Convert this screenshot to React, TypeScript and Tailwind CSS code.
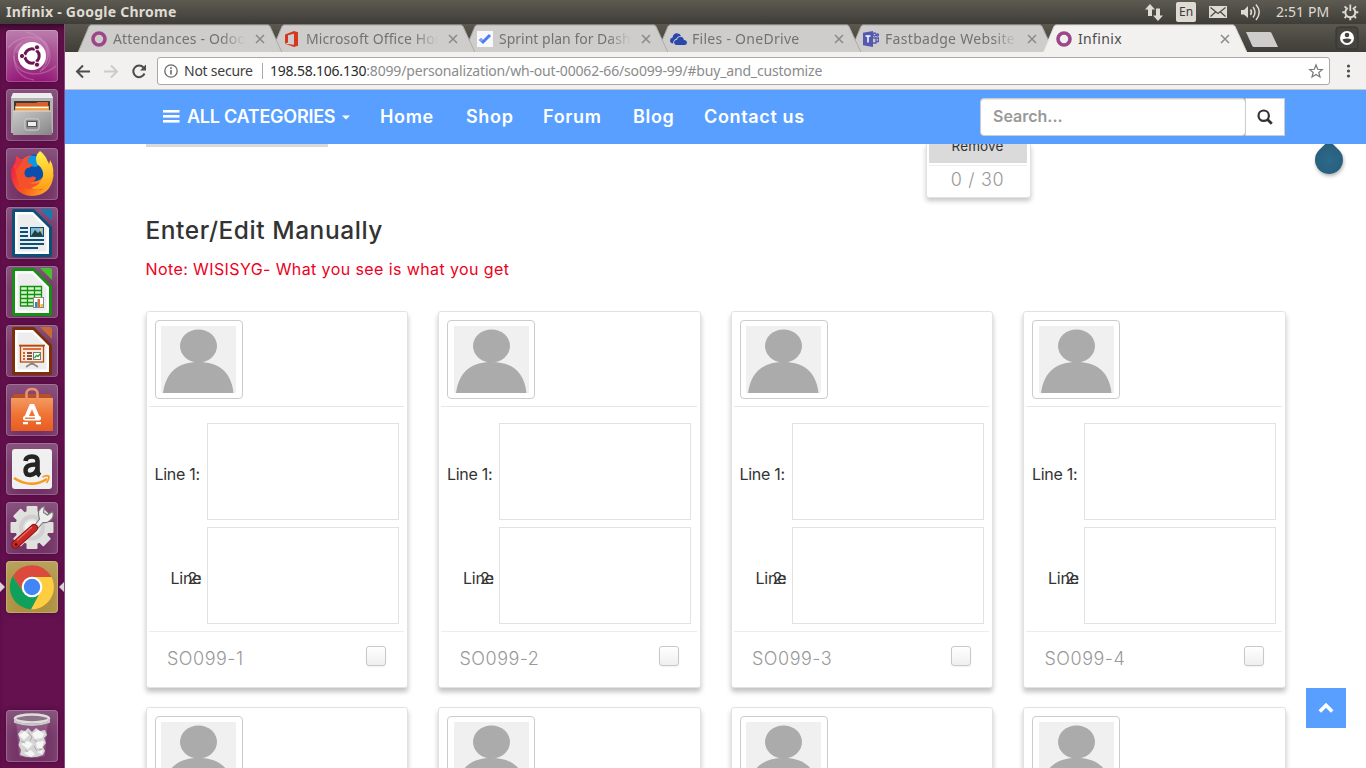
import React from "react";

const UBUNTU = "font-['Noto_Sans','Open_Sans',sans-serif]";
const POPPINS = "font-['Inter','Noto_Sans',sans-serif]";

/* ---------- Desktop top bar ---------- */

function TopBar() {
  return (
    <header
      className={`flex h-6 shrink-0 items-center bg-linear-to-b from-[#5d5b51] to-[#3e3d38] text-[#dfdbd2] ${UBUNTU}`}
    >
      <div className="w-[1144px] pl-[6px] text-[14px] leading-6 font-bold tracking-[0.25px] whitespace-nowrap">
        Infinix - Google Chrome
      </div>
      <svg className="w-8 shrink-0" height="24" viewBox="0 0 32 24" fill="#dfdbd2">
        <path d="M6 4 L11 9.5 H8 V16 H4 V9.5 H1 Z" />
        <path d="M14 21 L19 15.500 H16 V8.500 H12 V15.500 H9 Z" />
      </svg>
      <div className="mr-[13px] flex h-5 w-5 items-center justify-center rounded-[2px] bg-[#dfdbd2] text-[12px] text-[#3c3b37]">
        En
      </div>
      <svg className="w-8 shrink-0" height="24" viewBox="0 0 32 24">
        <rect x="0" y="6" width="18" height="12" fill="#dfdbd2" />
        <path d="M1.500 7.500 L9 13.500 L16.500 7.500 M1.500 16.500 L6.500 12 M16.500 16.500 L11.500 12" stroke="#4a4943" fill="none" strokeWidth="1.200" />
      </svg>
      <svg className="w-[35px] shrink-0" height="24" viewBox="0 0 35 24">
        <path d="M0 10 H3 L7 6 V18 L3 14.500 H0 Z" fill="#dfdbd2" />
        <path d="M9.500 9.500 Q11.500 12.200 9.500 15 M12 7 Q16 12.200 12 17.500 M15 4.500 Q21.500 12.200 15 20" stroke="#dfdbd2" strokeWidth="1.500" fill="none" />
      </svg>
      <div className="w-[66px] text-[14px] leading-6 tracking-[0.1px] whitespace-nowrap">2:51 PM</div>
      <svg width="18" height="24" viewBox="0 0 18 24" fill="none" stroke="#dfdbd2">
        <path d="M5.800 8 A5 5 0 1 0 10.800 8" strokeWidth="2" />
        <path d="M8.300 4.500 V11" strokeWidth="1.800" />
        <path d="M13.800 12.200 H16.300 M2.800 12.200 H0.300 M12.200 16.200 L14 18 M4.400 16.200 L2.600 18 M8.300 17.700 V20.200 M12.200 8.200 L14 6.400 M4.400 8.200 L2.600 6.400" strokeWidth="1.900" />
      </svg>
    </header>
  );
}

/* ---------- Launcher ---------- */

function UbuntuIcon() {
  return (
    <svg viewBox="0 0 52 52" className="h-full w-full">
      <g fill="none" stroke="#dca6d0" strokeOpacity=".35" strokeWidth="1.300">
        <path d="M2 18 C12 4 38 2 43 20 C46 30 42 36 36 40" />
        <path d="M20 2 C40 6 50 24 34 42" />
        <path d="M50 36 C36 48 14 46 9 32 C6 22 10 16 16 13" />
        <path d="M8 26 C8 40 14 48 28 50" />
      </g>
      <path d="M8 22 C8 8 30 4 40 12 C46 24 42 30 40 34 Z" fill="#d48cc4" opacity=".3" />
      <circle cx="26" cy="26" r="14" fill="#fff" />
      <circle cx="26" cy="26" r="7.200" fill="none" stroke="#6b1552" strokeWidth="3" />
      <path d="M26 26 L14 26 M26 26 L32 15.600 M26 26 L32 36.400" stroke="#fff" strokeWidth="1.300" />
      <circle cx="26" cy="26" r="5" fill="#fff" />
      <g fill="#6b1552" stroke="#fff" strokeWidth="1">
        <circle cx="16" cy="26" r="2.600" />
        <circle cx="31" cy="17.300" r="2.600" />
        <circle cx="31" cy="34.700" r="2.600" />
      </g>
    </svg>
  );
}

function FilesIcon() {
  return (
    <svg viewBox="0 0 52 52" className="h-full w-full">
      <defs>
        <linearGradient id="cab" x1="0" y1="0" x2="1" y2="1">
          <stop offset="0" stopColor="#c9c9c9" />
          <stop offset=".5" stopColor="#a8a8a8" />
          <stop offset="1" stopColor="#858585" />
        </linearGradient>
      </defs>
      <path d="M7 4 H45 L47 9 V44 H5 V9 Z" fill="#b5b5b5" />
      <path d="M7 4 H45 L47 9 H5 Z" fill="#ededed" />
      <rect x="8" y="12" width="36" height="10" fill="#3b3936" />
      <path d="M10 14 H30 L32 13 H42 V18 H10 Z" fill="#d9602c" />
      <path d="M9 17 H43 V22 H9 Z" fill="#f1a048" />
      <path d="M10 18.500 H42" stroke="#fff" strokeWidth="1.200" />
      <path d="M7 22 H45 L46 46 H7 Z" fill="url(#cab)" />
      <path d="M7 22 H45" stroke="#ddd" />
      <rect x="19" y="30" width="14" height="11" rx="2" fill="#8e8e8e" stroke="#d5d5d5" />
      <rect x="21.500" y="32.500" width="9" height="5" fill="#eee" stroke="#555" />
    </svg>
  );
}

function FirefoxIcon() {
  return (
    <svg viewBox="0 0 52 52" className="h-full w-full">
      <defs>
        <linearGradient id="ff" x1="0" y1=".3" x2="1" y2=".7">
          <stop offset="0" stopColor="#ee2048" />
          <stop offset=".45" stopColor="#fa5a1c" />
          <stop offset="1" stopColor="#ffb62a" />
        </linearGradient>
        <linearGradient id="ffy" x1="0" y1="0" x2="0" y2="1">
          <stop offset="0" stopColor="#fff34a" />
          <stop offset="1" stopColor="#ff9e12" />
        </linearGradient>
      </defs>
      <path d="M5 26 Q5 17 10 13 V8 L16 13 L26 10 L40 12 Q48 18 47.500 28 Q45 47 26 48 Q7 47 5 26 Z" fill="url(#ff)" />
      <circle cx="27" cy="20" r="13.500" fill="#0a4fae" />
      <path d="M17 11 Q24 5 33 9 Q36 16 30 19 Q22 19 17 11 Z" fill="#0e96e2" />
      <path d="M8 18 Q11 12 17 11 Q21 7 26 7 Q21 10 21.500 14.500 L26.500 16.500 Q26 19 20.500 20.500 Q17 24 19.500 28.500 Q23 30.500 26 28.500 Q30 28 30 30.500 Q27 35.500 22 35 Q30 38 40 31 L36 42 L14 40 Z" fill="#f5502c" />
      <path d="M10 8 L17 12.500 L9 24 Z" fill="#f03a40" />
      <path d="M34 3 Q28 8 31 16 Q38 21 37 28 Q35 37 25 40 Q38 45 45 34 Q50 20 44 12 L43 17 Q40 7 34 3 Z" fill="url(#ffy)" />
    </svg>
  );
}

function DocumentIcon({ color, corner, children }: { color: string; corner: string; children: React.ReactNode }) {
  return (
    <svg viewBox="0 0 52 52" className="h-full w-full">
      <path d="M8 2 H28 L46 20 V48 Q46 50 44 50 H8 Q6 50 6 48 V4 Q6 2 8 2 Z" fill={color} />
      <path d="M34 2 H44 Q46 2 46 4 V14 Z" fill={corner} />
      <path d="M9 5 H27 L43 21 V47 H9 Z" fill="#fff" />
      <path d="M11.500 7.500 H26 L40.500 22 V44.500 H11.500 Z" fill="#ededed" />
      {children}
    </svg>
  );
}

function WriterIcon() {
  return (
    <DocumentIcon color="#0a5078" corner="#1a7ab0">
      <path d="M14 21 H22 M14 25 H22 M14 29 H22 M14 33 H38 M14 37 H38 M14 41 H32" stroke="#0a5078" strokeWidth="1.800" />
      <rect x="24.500" y="20.500" width="13" height="9" fill="#7cb9e0" stroke="#0a5078" />
      <path d="M25 29 L29 23 L32 26 L34 24 L37 29 Z" fill="#243f3c" />
      <circle cx="35" cy="22.800" r="1.300" fill="#f7c331" />
    </DocumentIcon>
  );
}

function CalcIcon() {
  return (
    <DocumentIcon color="#159014" corner="#43c330">
      <rect x="14" y="20" width="22" height="20" fill="#d4f5c8" />
      <path d="M14 20.500 H36 M14 24.500 H36 M14 28.500 H36 M14 32.500 H36 M14 36.500 H36 M14 40 H36 M14.500 20 V40 M21.500 20 V40 M28.500 20 V40 M35.500 20 V40" stroke="#159014" strokeWidth="1.300" />
      <rect x="27.500" y="31.500" width="10" height="10" fill="#fff" stroke="#888" />
      <path d="M29 36 H31.500 V41 H29 Z" fill="#0d8fd6" />
      <path d="M31.500 33 H34 V41 H31.500 Z" fill="#e06a2c" />
      <path d="M34.500 38 H37 V41 H34.500 Z" fill="#f5c02c" />
    </DocumentIcon>
  );
}

function ImpressIcon() {
  return (
    <DocumentIcon color="#7d2f0a" corner="#c86a34">
      <path d="M13 20.500 H39" stroke="#b7490f" strokeWidth="1.600" />
      <rect x="14.500" y="21" width="23" height="16" fill="#fce9dd" stroke="#b7490f" strokeWidth="1.300" />
      <path d="M17 24 H35" stroke="#d7622a" strokeWidth="1.800" />
      <path d="M17 28 H19 M17 31 H19 M17 34 H19" stroke="#d7622a" strokeWidth="2" />
      <path d="M21 28 H26 M21 31 H26 M21 34 H26" stroke="#5b2408" strokeWidth="1.500" />
      <rect x="27.500" y="27.500" width="7" height="7" fill="#fff" stroke="#777" />
      <path d="M28.500 33 L30.500 30.500 L32 31.500 L34 29" stroke="#2fa52c" fill="none" strokeWidth="1.400" />
      <path d="M26 37 V39 M26 38 L20 42 M26 38 L32 42" stroke="#888" strokeWidth="1.700" />
    </DocumentIcon>
  );
}

function SoftwareIcon() {
  return (
    <svg viewBox="0 0 52 52" className="h-full w-full">
      <defs>
        <linearGradient id="bag" x1="0" y1="0" x2="0" y2="1">
          <stop offset="0" stopColor="#f39a62" />
          <stop offset=".5" stopColor="#ef7434" />
          <stop offset="1" stopColor="#e85c22" />
        </linearGradient>
      </defs>
      <path d="M5 14 L8 10 H44 L47 14 Z" fill="#b5502a" />
      <path d="M5 14 H47 V47 H5 Z" fill="url(#bag)" />
      <path d="M20.500 17 V9 Q21 5 26 5 Q31 5 31.500 9 V17" stroke="#ed9069" strokeWidth="2.600" fill="none" />
      <path d="M20 34 L25.200 22 H26.800 L32 34" stroke="#fff" strokeWidth="4" fill="none" />
      <rect x="17" y="32" width="18" height="4.400" rx="2" fill="#fff" />
      <path d="M19 34.200 H29" stroke="#ee6b2c" strokeWidth="1.300" />
      <path d="M17 39.200 H22 M30 39.200 H35" stroke="#fff" strokeWidth="2.200" />
    </svg>
  );
}

function AmazonIcon() {
  return (
    <svg viewBox="0 0 52 52" className="h-full w-full">
      <rect x="6" y="6" width="40" height="40" rx="3" fill="#f0f0f0" />
      <path d="M19.500 18 Q20 13.500 26 13.500 Q31.500 13.500 31.500 18 V28 Q31.500 31 34 32.500" stroke="#242424" strokeWidth="4.600" fill="none" />
      <path d="M31 21.500 Q19.500 21 19.500 27.500 Q19.500 32 24 32 Q29.500 31.500 31.300 26" stroke="#242424" strokeWidth="4.400" fill="none" />
      <path d="M8 35 Q25 46 41 36" stroke="#f79a1e" strokeWidth="2.600" fill="none" />
      <path d="M36.500 34 Q41 31.500 43 33.500 Q43 37 40.500 40" stroke="#f79a1e" strokeWidth="1.700" fill="none" />
    </svg>
  );
}

function SettingsIcon() {
  return (
    <svg viewBox="0 0 52 52" className="h-full w-full">
      <g fill="#e0e0de">
        {[0, 45, 90, 135].map((a) => (
          <rect key={a} x="20.500" y="4" width="11" height="43" rx="1" transform={`rotate(${a} 26 25.500)`} />
        ))}
        <circle cx="26" cy="25.500" r="17" />
      </g>
      <circle cx="26" cy="25.500" r="11" fill="none" stroke="#cfcfcd" strokeWidth="4" />
      <circle cx="26" cy="25.500" r="7" fill="#f4f4f3" />
      <path d="M29 23 L33.500 17 Q30 7 38.500 4 L37.500 10.500 L41.500 13 L46.500 9.500 Q49 16 42 20 Q40 21 37 20.500 L32 26 Z" fill="#eeeeee" stroke="#777" strokeWidth="1.100" />
      <path d="M9.500 42.500 L28 26" stroke="#8d1010" strokeWidth="8" strokeLinecap="round" />
      <path d="M9.500 42.500 L28 26" stroke="#c92a26" strokeWidth="6.200" strokeLinecap="round" />
      <path d="M11 38.500 L26 25" stroke="#ea6a62" strokeWidth="1.400" />
      <circle cx="10" cy="42.500" r="1.300" fill="#4a0606" />
    </svg>
  );
}

function ChromeIcon() {
  return (
    <svg viewBox="0 0 52 52" className="h-full w-full">
      <path d="M26 16 H45.500 A22.200 22.200 0 0 1 25 48.200 L35 30 Z" fill="#ffcd40" />
      <path d="M6.800 15 L17.500 31 L33 33 L25 48.200 A22.200 22.200 0 0 1 6.800 15 Z" fill="#11a05c" />
      <path d="M6.800 15 A22.200 22.200 0 0 1 45.500 16 H26 L17 30 Z" fill="#dc4a3d" />
      <circle cx="26" cy="26" r="10.300" fill="#fff" />
      <circle cx="26" cy="26" r="8.200" fill="#4285f4" />
    </svg>
  );
}

function TrashIcon() {
  return (
    <svg viewBox="0 0 52 52" className="h-full w-full">
      <path d="M10 9 L13 46 Q26 50 39 46 L42 9 Z" fill="#c9a5c1" opacity=".28" />
      <path d="M12 24 L15 20 L19 21 L22 18 L26 22 L30 18 L34 21 L39 20 L41 25 L38 28 L40 33 L37 37 L39 41 L37 45 Q26 49.500 14 45 L15 40 L12.500 35 L14 30 Z" fill="#d6d5d5" />
      <path d="M13 25 L19 21 L23 25 L18 30 Z M26 24 L32 20 L38 24 L36 28 L29 29 Z M15 34 L22 31 L27 34 L22 39 Z M30 32 L38 31 L36 38 L31 38 Z M18 43 L25 40 L29 44 L25 47 Z M31 42 L37 40 L36 44 Z" fill="#f6f6f6" />
      <path d="M22 22 L26 27 L24 31 M28 30 L31 32 M15 31 L19 33 M28 36 L31 41 M19 40 L22 42 M33 40 L36 39" stroke="#aaa8a9" strokeWidth="1" fill="none" />
      <ellipse cx="26" cy="8.500" rx="17" ry="4" fill="#8d7388" stroke="#dededc" strokeWidth="2.600" />
      <path d="M9 9 V12 Q26 18 43 12 V9" fill="none" stroke="#c9c8c7" strokeWidth="2" />
    </svg>
  );
}

function Tile({ children, tone = "bg-[#743366]" }: { children: React.ReactNode; tone?: string }) {
  return (
    <div className={`relative h-[52px] w-[52px] shrink-0 rounded-[4px] shadow-[0_0_5px_rgba(0,0,0,0.35),inset_0_0_0_1px_rgba(255,255,255,0.2),inset_0_12px_16px_rgba(255,255,255,0.16)] ${tone}`}>
      {children}
    </div>
  );
}

function Launcher() {
  return (
    <nav className="flex w-[65px] shrink-0 flex-col items-center gap-[7px] border-r border-[#8a4c80] bg-[#65104f] pt-[6px] shadow-[inset_0_6px_6px_-3px_rgba(0,0,0,0.5)]">
      <Tile tone="bg-linear-to-b from-[#b0679f] to-[#941478]"><UbuntuIcon /></Tile>
      <Tile><FilesIcon /></Tile>
      <Tile><FirefoxIcon /></Tile>
      <Tile><WriterIcon /></Tile>
      <Tile><CalcIcon /></Tile>
      <Tile><ImpressIcon /></Tile>
      <Tile><SoftwareIcon /></Tile>
      <Tile><AmazonIcon /></Tile>
      <Tile><SettingsIcon /></Tile>
      <Tile tone="bg-[#ad9140]">
        <svg className="absolute top-[20px] left-[-6px]" width="5" height="12" viewBox="0 0 5 12">
          <path d="M0 1 L5 6 L0 11 Z" fill="#dcd2da" />
        </svg>
        <svg className="absolute top-[20px] left-[53px]" width="5" height="12" viewBox="0 0 5 12">
          <path d="M5 1 L0 6 L5 11 Z" fill="#dcd2da" />
        </svg>
        <ChromeIcon />
      </Tile>
      <div className="mt-[90px]"><Tile><TrashIcon /></Tile></div>
    </nav>
  );
}

/* ---------- Browser chrome ---------- */

function RingFavicon() {
  return (
    <svg width="16" height="16" viewBox="0 0 16 16">
      <circle cx="8" cy="8" r="6" fill="none" stroke="#9c4789" strokeWidth="3.600" />
    </svg>
  );
}

function OfficeFavicon() {
  return (
    <svg width="16" height="16" viewBox="0 0 16 16">
      <path d="M1 3.500 L10 0 L14 1.200 V14.800 L10 16 L1 12.700 L10 13.700 V2.700 L4 4.200 V11.500 L1 12.700 Z" fill="#d6371f" />
    </svg>
  );
}

function CheckFavicon() {
  return (
    <svg width="16" height="16" viewBox="0 0 16 16">
      <rect width="16" height="16" fill="#f8f8fa" />
      <path d="M3 8 L6 11 L13 4" stroke="#4a7df0" strokeWidth="3" fill="none" />
      <path d="M3 8 L5 10" stroke="#8a9cf5" strokeWidth="3" />
    </svg>
  );
}

function OneDriveFavicon() {
  return (
    <svg width="17" height="16" viewBox="0 0 17 16" fill="#2a47ac">
      <path d="M3 12.500 Q0 12 0 9.500 Q0 7 2.600 6.500 Q3 2.500 7 2.300 Q10 2.500 11 5 Q7.500 4.500 6.300 7.800 Q3.500 8.500 3 12.500 Z" />
      <path d="M6 14 Q4 13.500 4 11.300 Q4.300 9 7 8.800 Q8 5.500 11 5.700 Q13.500 6 14 9 Q17 9.500 17 11.800 Q16.800 13.800 15 14 Z" />
    </svg>
  );
}

function TeamsFavicon() {
  return (
    <svg width="16" height="16" viewBox="0 0 16 16">
      <path d="M0 1.800 L10 0 V16 L0 14.200 Z" fill="#5558af" />
      <path d="M2.500 5 H7.500 M5 5 V11.500" stroke="#fff" strokeWidth="1.500" />
      <g fill="none" stroke="#5558af" strokeWidth="1.300">
        <circle cx="11.500" cy="3.500" r="1.500" />
        <circle cx="14.500" cy="4" r="1" />
        <path d="M10 7 H13 V12 H10 M13 7 H15.500 V10.500 H13" />
      </g>
    </svg>
  );
}

type TabInfo = { title: string; icon: React.ReactNode; z: string; track: string; active?: boolean };

const tabs: TabInfo[] = [
  { title: "Attendances - Odoo", icon: <RingFavicon />, z: "z-[6]", track: "tracking-[0.15px]" },
  { title: "Microsoft Office Home", icon: <OfficeFavicon />, z: "z-[5]", track: "tracking-[0.1px]" },
  { title: "Sprint plan for Dashboard", icon: <CheckFavicon />, z: "z-[4]", track: "tracking-[0px]" },
  { title: "Files - OneDrive", icon: <OneDriveFavicon />, z: "z-[3]", track: "tracking-[0.28px]" },
  { title: "Fastbadge Website", icon: <TeamsFavicon />, z: "z-[2]", track: "tracking-[0.32px]" },
  { title: "Infinix", icon: <RingFavicon />, z: "z-[8]", track: "tracking-[0.35px]", active: true },
];

function Tab({ tab }: { tab: TabInfo }) {
  return (
    <div className={`relative flex h-[28px] w-[193px] shrink-0 items-center pt-[2px] pl-[13px] ${tab.z}`}>
      <svg className="absolute top-0 left-0 -z-10 overflow-visible" width="204" height="28" viewBox="0 0 204 28">
        <path d="M0 28.500 L11 2.500 Q12 1 13 1 H190 Q191 1 192 2.500 L204 28.500 Z" fill={tab.active ? "#f2f1f0" : "#cfcdcb"} />
        <path d="M0 28.500 L11 2.500 Q12 1 13 1 H190 Q191 1 192 2.500 L204 28.500" fill="none" stroke={tab.active ? "#d9d8d5" : "#aeaca8"} strokeWidth="1" />
      </svg>
      <div className="w-[22px] shrink-0">{tab.icon}</div>
      <div
        className={`w-[135px] shrink-0 overflow-hidden text-[14px] leading-[20px] whitespace-nowrap ${tab.track} ${
          tab.active ? "text-[#4c4c4c]" : "mask-r-from-80% mask-r-to-98% text-[#74726f]"
        }`}
      >
        {tab.title}
      </div>
      <svg className="ml-[7px] shrink-0" width="10" height="10" viewBox="0 0 10 10">
        <path d="M1 1 L9 9 M9 1 L1 9" stroke="#8b8987" strokeWidth="1.500" />
      </svg>
    </div>
  );
}

function TabStrip() {
  return (
    <div className={`isolate flex h-[28px] shrink-0 bg-linear-to-b from-[#5a584e] to-[#3f3e38] pl-[13px] ${UBUNTU}`}>
      {tabs.map((t) => (
        <Tab key={t.title} tab={t} />
      ))}
      <svg className="ml-[10px]" width="34" height="28" viewBox="0 0 34 28">
        <path d="M0 8 H23.500 Q25 8 25.500 9 L32 23 H8 Q6.800 23 6.300 22 Z" fill="#cfcdcb" />
      </svg>
      <svg className="ml-[55px]" width="24" height="28" viewBox="0 0 24 28">
        <rect x="1" y="3" width="22" height="22" rx="3" fill="#45443e" stroke="#35342f" />
        <circle cx="12" cy="14" r="7" fill="#fff" />
        <circle cx="12" cy="11" r="2.300" fill="#45443e" />
        <path d="M7.500 15.500 Q12 13.500 16.500 15.500 Q15 19 12 19 Q9 19 7.500 15.500 Z" fill="#45443e" />
      </svg>
    </div>
  );
}

function Toolbar() {
  return (
    <div className={`z-10 flex h-[38px] shrink-0 items-center border-b border-[#c6c5c3] bg-[#f2f1f0] text-[14px] ${UBUNTU}`}>
      <svg className="w-[92px] shrink-0" height="36" viewBox="0 0 92 36" fill="none" strokeWidth="2">
        <path d="M25 18.500 H12.500 M18 12.500 L12 18.500 L18 24.500" stroke="#4d4d4d" />
        <path d="M39 18.500 H51.500 M46 12.500 L52 18.500 L46 24.500" stroke="#cccbca" />
        <path d="M78.500 14.500 A5.800 5.800 0 1 0 79.500 20.500" stroke="#4d4d4d" />
        <path d="M81 11.500 V17.500 H75 Z" fill="#4d4d4d" />
      </svg>
      <div className="flex h-[28px] w-[1173px] shrink-0 items-center rounded-[3px] border border-[#a9a8a6] bg-white">
        <svg className="ml-[6px] shrink-0" width="14" height="14" viewBox="0 0 14 14">
          <circle cx="7" cy="7" r="6.200" fill="none" stroke="#6a6a6a" strokeWidth="1.300" />
          <path d="M7 6 V10.500 M7 3.300 V4.900" stroke="#6a6a6a" strokeWidth="1.600" />
        </svg>
        <div className="ml-[6px] w-[78px] shrink-0 tracking-[-0.25px] whitespace-nowrap text-[#404040]">Not secure</div>
        <div className="h-4 w-px shrink-0 bg-[#aaa]" />
        <div className="ml-[7px] w-[1038px] whitespace-nowrap text-[#8b8b8b]">
          <span className="tracking-[-0.22px] text-[#2b2b2b]">198.58.106.130</span>
          <span className="tracking-[-0.17px]">:8099/personalization/wh-out-00062-66/so099-99/#buy_and_customize</span>
        </div>
        <svg width="16" height="16" viewBox="0 0 16 16">
          <path d="M8 2 L9.700 6.300 L14.300 6.600 L10.800 9.500 L12 14 L8 11.500 L4 14 L5.200 9.500 L1.700 6.600 L6.300 6.300 Z" fill="none" stroke="#777" strokeWidth="1.200" />
        </svg>
      </div>
      <svg className="ml-[16px]" width="5" height="16" viewBox="0 0 5 16" fill="#4d4d4d">
        <circle cx="2.500" cy="3" r="1.600" />
        <circle cx="2.500" cy="8" r="1.600" />
        <circle cx="2.500" cy="13" r="1.600" />
      </svg>
    </div>
  );
}

/* ---------- Site ---------- */

function SiteNav() {
  return (
    <div className="z-20 flex h-[54px] shrink-0 items-center bg-[#589fff] pl-[98px] text-[18px] font-semibold tracking-[0.65px] whitespace-nowrap text-white">
      <svg className="mr-[7px] shrink-0" width="17" height="16" viewBox="0 0 17 16" fill="#fff">
        <rect x="0" y="1" width="16.500" height="2.600" />
        <rect x="0" y="6" width="16.500" height="2.600" />
        <rect x="0" y="11" width="16.500" height="2.600" />
      </svg>
      <div className="w-[155px] pb-[2px] tracking-[-0.25px]">ALL CATEGORIES</div>
      <svg className="mr-[30px] shrink-0" width="8" height="5" viewBox="0 0 8 5">
        <path d="M0 0.500 H8 L4 4.500 Z" fill="#fff" />
      </svg>
      <div className="w-[86px] pb-[2px]">Home</div>
      <div className="w-[77px] pb-[2px]">Shop</div>
      <div className="w-[90px] pb-[2px]">Forum</div>
      <div className="w-[71px] pb-[2px]">Blog</div>
      <div className="w-[276px] pb-[2px]">Contact us</div>
      <div className="flex h-[38px] shrink-0 text-[16px] tracking-normal">
        <div className="flex w-[266px] items-center rounded-[4px] border border-[#ccc] bg-white pb-[2px] pl-[12px] text-[#999] shadow-[inset_0_1px_1px_rgba(0,0,0,0.08)]">
          Search...
        </div>
        <div className="-ml-px flex w-[40px] items-center justify-center border border-[#ccc] bg-white">
          <svg width="16" height="16" viewBox="0 0 16 16" fill="none" stroke="#333">
            <circle cx="6.700" cy="6.700" r="5.200" strokeWidth="2.200" />
            <path d="M10.500 10.500 L14.800 14.800" strokeWidth="2.800" />
          </svg>
        </div>
      </div>
    </div>
  );
}

function Portrait() {
  return (
    <div className="flex h-[79px] w-[88px] items-center justify-center rounded-[4px] border border-[#ccc] bg-white">
      <svg width="75" height="67" viewBox="0 0 75 67">
        <rect width="75" height="67" fill="#f0f0f0" />
        <ellipse cx="37.500" cy="20" rx="18.500" ry="16.500" fill="#ababab" />
        <path d="M2 67 C5 45 18 36 37.500 36 C57 36 70 45 72.500 67 Z" fill="#ababab" />
      </svg>
    </div>
  );
}

function BadgeCard({ code }: { code: string }) {
  return (
    <div className="h-[377px] rounded-[3px] border border-[#e2e2e2] bg-white pt-[8px] pr-[3px] pl-[2px] text-[#333] shadow-[0_4px_5px_rgba(0,0,0,0.24)]">
      <div className="border-b border-[#e7e7e7] pb-[7px] pl-[6px]">
        <Portrait />
      </div>
      <div className="flex flex-col gap-[7px] border-b border-[#ededed] pt-[16px] pr-[5.5px] pb-[7px] pl-[6px] text-[16px]">
        <div className="flex items-center justify-between">
          <div className="pt-[4px] tracking-[-0.3px] whitespace-nowrap">Line 1:</div>
          <div className="h-[97px] w-[192px] border border-[#e2e2e2]" />
        </div>
        <div className="flex items-center justify-between">
          <div className="relative pt-[4px] pl-[16px] tracking-[-0.2px]">
            Line
            <span className="absolute top-[4px] left-[33px]">2:</span>
          </div>
          <div className="h-[97px] w-[192px] border border-[#e2e2e2] bg-white" />
        </div>
      </div>
      <div className="flex items-start justify-between pt-[14px] pr-[18px] pl-[18.5px]">
        <div className="pt-px text-[18px] leading-[24px] font-light tracking-[0.5px] text-[#999]">{code}</div>
        <div className="h-[20px] w-[20px] rounded-[3px] border border-[#c8c8c8] bg-linear-to-b from-white to-[#efefef] shadow-[0_1px_2px_rgba(0,0,0,0.06)]" />
      </div>
    </div>
  );
}

function Content() {
  return (
    <main className="relative h-[624px] overflow-hidden bg-white">
      <div className="mx-auto w-[1170px] px-[15px] text-[#333]">
        <div className="flex h-[54px] items-start">
          <div className="h-[3px] w-[182px] bg-[#d9d9d9]" />
          <div className="ml-[598px] h-[54px] w-[105px] rounded-b-[3px] border border-t-0 border-[#e2e2e2] bg-white pr-[3px] pl-[2px] text-center shadow-[0_3px_5px_rgba(0,0,0,0.22)]">
            <div className="h-[19px] bg-[#dadada] text-[13.5px] leading-[5px] tracking-[0.1px]">Remove</div>
            <div className="mt-[2px] border-t border-[#eee] text-[18px] leading-[28px] font-light tracking-[0.7px] text-[#999]">0 / 30</div>
          </div>
        </div>
        <h2 className="pt-[17px] text-[24.5px] leading-[30px] font-[450] tracking-[0.55px]">Enter/Edit Manually</h2>
        <p className="pt-[12px] text-[16px] leading-[24px] tracking-[0.4px] text-[#ee0022]">Note: WISISYG- What you see is what you get</p>
      </div>
      <div className="mx-auto mt-[30px] grid w-[1170px] grid-cols-4 gap-y-[19px]">
        {[1, 2, 3, 4, 5, 6, 7, 8].map((n) => (
          <div key={n} className="px-[15px]">
            <BadgeCard code={`SO099-${n}`} />
          </div>
        ))}
      </div>
      <div className="absolute top-[2px] left-[1250px] h-7 w-7 rotate-45 rounded-[50%] rounded-tl-none bg-radial from-[#2c698c] to-[#285c78] shadow-[2px_1px_4px_rgba(0,0,0,0.3)]" />
      <div className="absolute top-[544px] left-[1241px] flex h-10 w-10 items-center justify-center bg-[#589fff]">
        <svg width="16" height="12" viewBox="0 0 16 12" fill="none" stroke="#fff" strokeWidth="3.600">
          <path d="M1.800 9.500 L8 3.300 L14.200 9.500" />
        </svg>
      </div>
    </main>
  );
}

export default function App() {
  return (
    <div className="flex h-[768px] w-[1366px] flex-col overflow-hidden">
      <TopBar />
      <div className="flex h-[744px]">
        <Launcher />
        <div className="flex w-[1301px] shrink-0 flex-col">
          <TabStrip />
          <Toolbar />
          <div className={`flex flex-col ${POPPINS}`}>
            <SiteNav />
            <Content />
          </div>
        </div>
      </div>
    </div>
  );
}
